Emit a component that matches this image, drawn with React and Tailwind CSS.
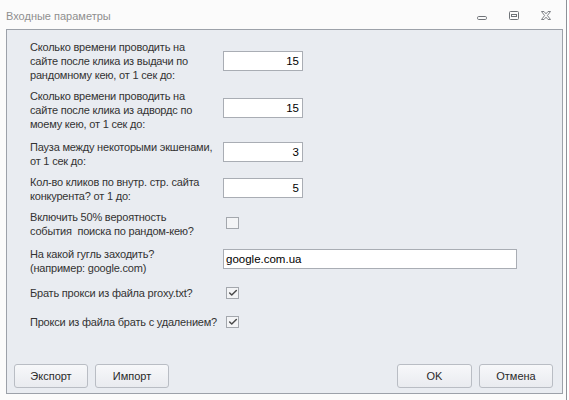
import { Check } from 'lucide-react'

const FONT = { fontFamily: '"Liberation Sans", Arial, sans-serif' }

const ROWS = [
  { mt: 'mt-[8px]', label: ['Сколько времени проводить на', 'сайте после клика из выдачи по', 'рандомному кею, от 1 сек до:'], type: 'num', value: '15', off: 'mt-[11px]' },
  { mt: 'mt-[7px]', label: ['Сколько времени проводить на', 'сайте после клика из адвордс по', 'моему кею, от 1 сек до:'], type: 'num', value: '15', off: 'mt-[9px]' },
  { mt: 'mt-[9px]', label: ['Пауза между некоторыми экшенами,', 'от 1 сек до:'], type: 'num', value: '3', off: 'mt-[2px]' },
  { mt: 'mt-[7px]', label: ['Кол-во кликов по внутр. стр. сайта', 'конкурента? от 1 до:'], type: 'num', value: '5', off: 'mt-[3px]' },
  { mt: 'mt-[7px]', label: ['Включить 50% вероятность', 'события  поиска по рандом-кею?'], type: 'check', value: false, off: 'mt-[7px]' },
  { mt: 'mt-[9px]', label: ['На какой гугль заходить?', '(например: google.com)'], type: 'text', value: 'google.com.ua', off: 'mt-[2px]' },
  { mt: 'mt-[11px]', label: ['Брать прокси из файла proxy.txt?'], type: 'check', value: true, off: 'mt-[1px]' },
  { mt: 'mt-[15px]', label: ['Прокси из файла брать с удалением?'], type: 'check', value: true, off: 'mt-[1px]' },
]

function CheckBox({ checked }) {
  return (
    <div className="ml-[3px] w-[13px] h-[12px] border border-[#a3a7ad] bg-[#f3f4f6] flex items-center justify-center">
      {checked && <Check size={10} strokeWidth={3.5} className="text-[#4a4a4a]" />}
    </div>
  )
}

function Control({ row }) {
  if (row.type === 'check') return <CheckBox checked={row.value} />
  if (row.type === 'text') {
    return (
      <div className="w-[294px] h-[20px] border border-[#a9adb4] bg-white flex items-center pl-[2px] text-[11.5px] tracking-normal text-black">
        {row.value}
      </div>
    )
  }
  return (
    <div className="w-[80px] h-[20px] border border-[#a9adb4] bg-white flex items-center justify-end pr-[3px] text-[11.5px] tracking-normal text-black">
      {row.value}
    </div>
  )
}

function Btn({ children, w }) {
  return (
    <button className={`${w} h-[24px] rounded-[3px] border border-[#b9bdc4] bg-gradient-to-b from-[#f7f8fa] to-[#e9ebef] text-[11px] text-[#2a2a2a]`}>
      {children}
    </button>
  )
}

export default function App() {
  return (
    <div className="w-[569px] h-[400px] bg-white overflow-hidden" style={FONT}>
      <div className="w-[567px] h-[400px] border-r border-[#8d9198] bg-[#fbfbfb] flex flex-col">
        <div className="h-[29px] flex items-center pl-[6px] pr-[14px]">
          <span className="text-[11px] text-[#8f8f8f] mt-[3px]">Входные параметры</span>
          <div className="ml-auto flex items-center gap-[20px] mt-[3px] text-[#6f7378]">
            <svg width="12" height="12" viewBox="0 0 12 12" fill="none" stroke="currentColor" strokeWidth="1">
              <rect x="1.5" y="6.5" width="9" height="3" rx="1.2" />
            </svg>
            <svg width="12" height="12" viewBox="0 0 12 12" fill="none" stroke="currentColor" strokeWidth="1">
              <rect x="1.5" y="1.5" width="9" height="8" rx="1" />
              <rect x="3.5" y="4.5" width="5" height="2" />
            </svg>
            <svg width="12" height="12" viewBox="0 0 12 12" fill="none" stroke="currentColor" strokeWidth="0.9">
              <path d="M1.5 1.5 L4 1.5 L6 3.8 L8 1.5 L10.5 1.5 L7.4 5.5 L10.5 9.5 L8 9.5 L6 7.2 L4 9.5 L1.5 9.5 L4.6 5.5 Z" />
            </svg>
          </div>
        </div>
        <div className="ml-[6px] w-[557px] h-[365px] border border-[#9ca1a9] bg-[#e9ecf1] flex flex-col pl-[23px] pt-[2px] text-[#333] text-[11px] leading-[14px] tracking-[-0.2px]">
          {ROWS.map((row, i) => (
            <div key={i} className={`flex ${row.mt}`}>
              <div className="w-[193px] shrink-0">
                {row.label.map((l, j) => (
                  <div key={j} className="whitespace-pre">{l}</div>
                ))}
              </div>
              <div className={row.off}>
                <Control row={row} />
              </div>
            </div>
          ))}
          <div className="mt-auto mb-[5px] flex items-center pr-[9px] ml-[-16px] tracking-normal">
            <Btn w="w-[74px]">Экспорт</Btn>
            <div className="w-[7px]" />
            <Btn w="w-[74px]">Импорт</Btn>
            <div className="ml-auto" />
            <Btn w="w-[75px]">OK</Btn>
            <div className="w-[7px]" />
            <Btn w="w-[74px]">Отмена</Btn>
          </div>
        </div>
      </div>
    </div>
  )
}
